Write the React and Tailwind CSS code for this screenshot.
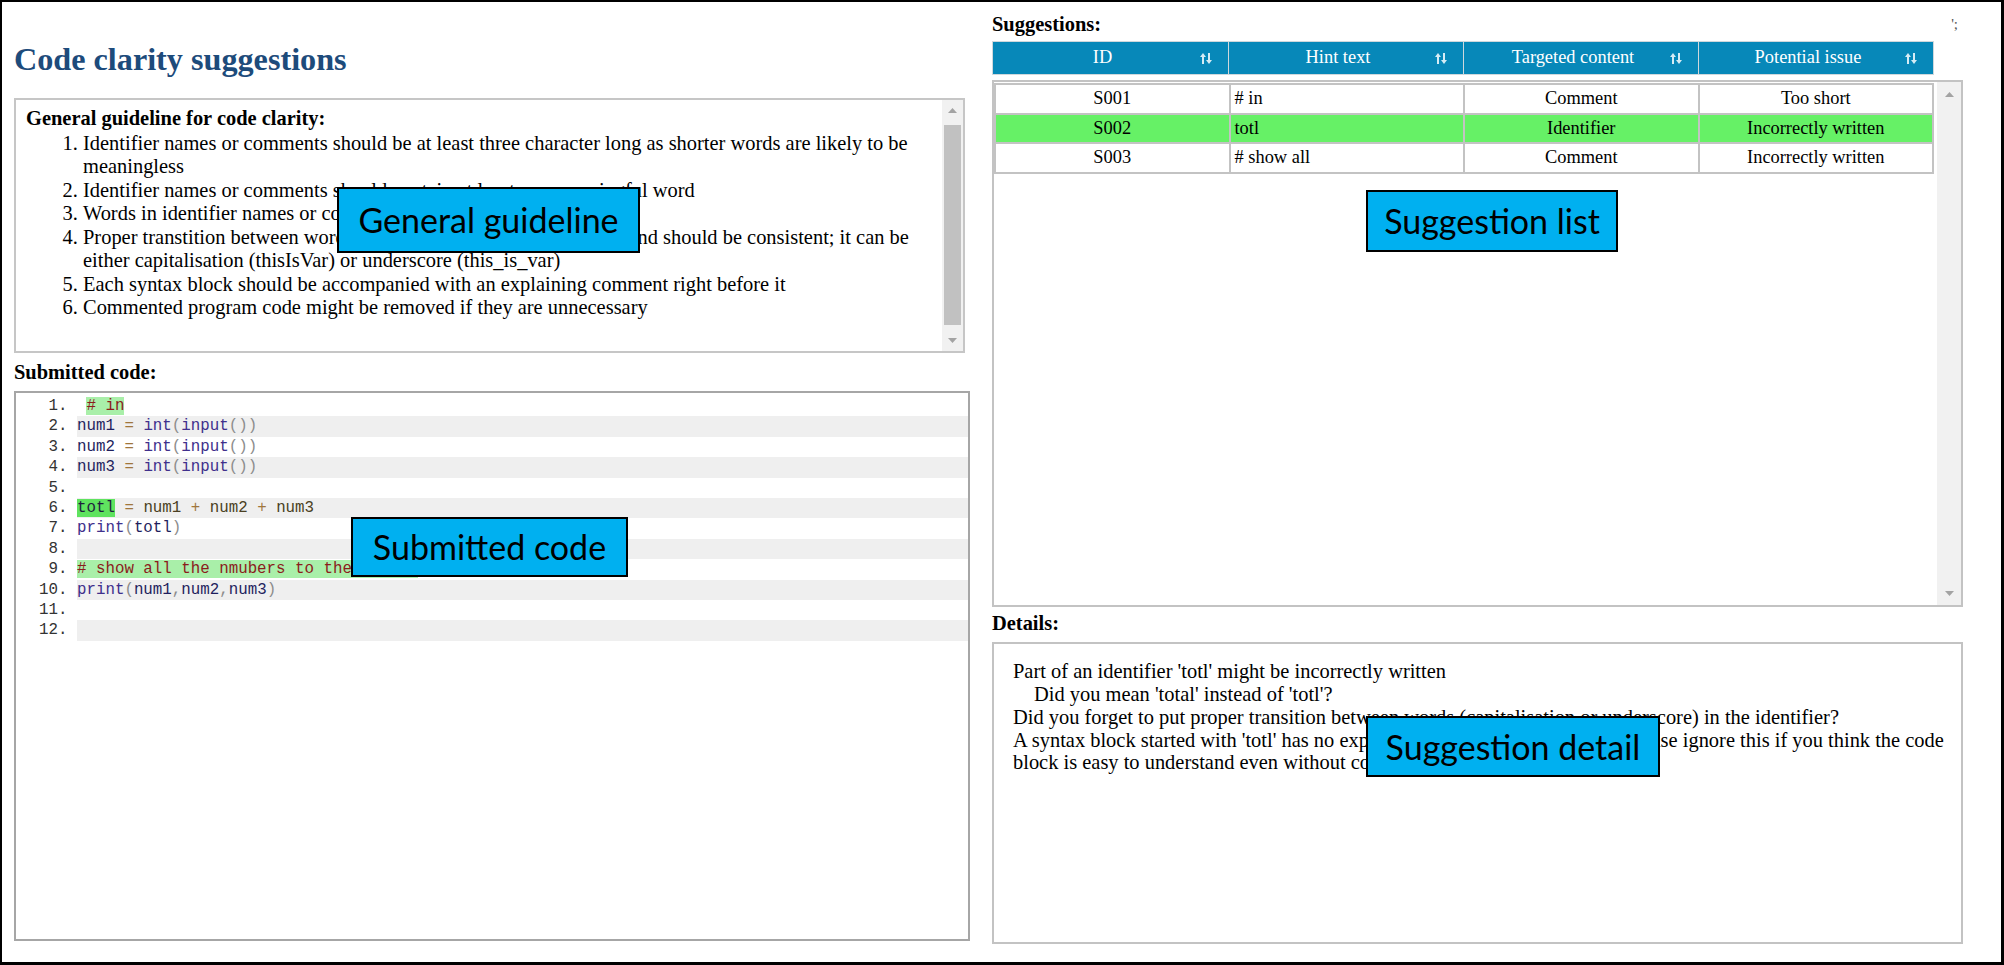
import React from "react"

const serif = "font-['Liberation_Serif','Times_New_Roman',serif]"
const mono = "font-['Liberation_Mono','Courier_New',monospace]"

const ident = "text-[#1f1f5e]"
const op = "text-[#a0763c]"
const fn = "text-[#40308c]"
const punc = "text-[#8c8c8c]"
const cmt = "text-[#8b1c1c]"

function UpArrow() {
  return (
    <svg width="9" height="5" viewBox="0 0 9 5">
      <path d="M4.5 0L9 5H0z" fill="#a3a3a3" />
    </svg>
  )
}

function DownArrow() {
  return (
    <svg width="9" height="5" viewBox="0 0 9 5">
      <path d="M0 0H9L4.5 5z" fill="#a3a3a3" />
    </svg>
  )
}

function SortIcon() {
  return (
    <svg width="12" height="11" viewBox="0 0 12 11" className="mr-[16px] shrink-0">
      <path d="M3 0L6 4H4V11H2V4H0z" fill="#d6ecf5" />
      <path d="M9 11L12 7H10V0H8V7H6z" fill="#d6ecf5" />
    </svg>
  )
}

function Callout({ className, children }) {
  return (
    <div
      className={
        "absolute flex items-center justify-center border-2 border-black bg-[#00b0f0] font-['Lato','Noto_Sans',sans-serif] text-[34px] leading-none text-black " +
        className
      }
    >
      {children}
    </div>
  )
}

const codeLines = [
  <>
    {" "}
    <span className={"bg-[#a9efa9] " + cmt}># in</span>
  </>,
  <>
    <span className={ident}>num1</span> <span className={op}>=</span> <span className={fn}>int</span>
    <span className={punc}>(</span>
    <span className={fn}>input</span>
    <span className={punc}>())</span>
  </>,
  <>
    <span className={ident}>num2</span> <span className={op}>=</span> <span className={fn}>int</span>
    <span className={punc}>(</span>
    <span className={fn}>input</span>
    <span className={punc}>())</span>
  </>,
  <>
    <span className={ident}>num3</span> <span className={op}>=</span> <span className={fn}>int</span>
    <span className={punc}>(</span>
    <span className={fn}>input</span>
    <span className={punc}>())</span>
  </>,
  null,
  <>
    <span className="bg-[#5fe35f] text-[#1f1f3e]">totl</span> <span className={op}>=</span>{" "}
    <span className="text-[#4a3f22]">num1</span> <span className={op}>+</span>{" "}
    <span className="text-[#4a3f22]">num2</span> <span className={op}>+</span>{" "}
    <span className="text-[#4a3f22]">num3</span>
  </>,
  <>
    <span className={fn}>print</span>
    <span className={punc}>(</span>
    <span className={ident}>totl</span>
    <span className={punc}>)</span>
  </>,
  null,
  <>
    <span className={"bg-[#a9efa9] " + cmt}># show all the nmubers to the screen</span>
  </>,
  <>
    <span className={fn}>print</span>
    <span className={punc}>(</span>
    <span className={ident}>num1</span>
    <span className={punc}>,</span>
    <span className={ident}>num2</span>
    <span className={punc}>,</span>
    <span className={ident}>num3</span>
    <span className={punc}>)</span>
  </>,
  null,
  null,
]

const rows = [
  { id: "S001", hint: "# in", target: "Comment", issue: "Too short" },
  { id: "S002", hint: "totl", target: "Identifier", issue: "Incorrectly written", active: true },
  { id: "S003", hint: "# show all", target: "Comment", issue: "Incorrectly written" },
]

const headers = ["ID", "Hint text", "Targeted content", "Potential issue"]

export default function App() {
  return (
    <div
      className={
        "relative flex h-[965px] w-[2004px] overflow-hidden border-b-[3px] border-l-2 border-r-[3px] border-t-2 border-black bg-white text-black " +
        serif
      }
    >
      {/* left column */}
      <div className="ml-[12px] flex w-[956px] flex-col">
        <h2 className="mt-[38px] h-[38px] text-[32.2px] font-bold leading-[38px] text-[#1d4b7b]">
          Code clarity suggestions
        </h2>

        <div className="mt-[20px] flex h-[255px] w-[951px] border-2 border-[#c6c6c6]">
          <div className="flex-1 pl-[10px] pt-[7px] text-[20.45px] leading-[23.45px]">
            <div className="font-bold">General guideline for code clarity:</div>
            <ol className="mt-[1.5px] list-decimal whitespace-nowrap pl-[57px]">
              <li>
                Identifier names or comments should be at least three character long as shorter words are likely to be
                <br />
                meaningless
              </li>
              <li>Identifier names or comments should contain at least one meaningful word</li>
              <li>Words in identifier names or comments should be spelled correctly</li>
              <li>
                Proper transtition between words in identifier names is mandatory and should be consistent; it can be
                <br />
                either capitalisation (thisIsVar) or underscore (this_is_var)
              </li>
              <li>Each syntax block should be accompanied with an explaining comment right before it</li>
              <li>Commented program code might be removed if they are unnecessary</li>
            </ol>
          </div>
          <div className="flex w-[21px] flex-col bg-[#f1f1f1]">
            <div className="flex h-[21px] items-center justify-center">
              <UpArrow />
            </div>
            <div className="flex-1 px-[2px] pb-[5px] pt-[4px]">
              <div className="h-[200px] bg-[#c1c1c1]" />
            </div>
            <div className="flex h-[21px] items-center justify-center">
              <DownArrow />
            </div>
          </div>
        </div>

        <div className="mt-[8.35px] text-[20.45px] font-bold leading-[23.5px]">Submitted code:</div>

        <div className="mt-[6.15px] h-[550px] w-[956px] border-2 border-[#a6a6a6] pt-[3px]">
          <ol className={"list-decimal pl-[61px] text-[15.8px] leading-[20.4px] text-[#333] " + mono}>
            {codeLines.map((line, i) => (
              <li key={i} className={"h-[20.4px] whitespace-pre " + (i % 2 === 1 ? "bg-[#efefef]" : "")}>
                {line}
              </li>
            ))}
          </ol>
        </div>
      </div>

      {/* right column */}
      <div className="ml-[22px] flex w-[971px] flex-col">
        <div className="mt-[11px] flex h-[23.5px] items-start justify-between">
          <span className="text-[20.45px] font-bold leading-[23.5px]">Suggestions:</span>
          <span className="mr-[5px] mt-[4px] text-[15px] leading-none text-[#555]">';</span>
        </div>

        <div className="mt-[4.5px] grid h-[34px] w-[942px] grid-cols-4 border border-[#cfd8dc] bg-[#0788b9] text-[18.4px] text-white">
          {headers.map((h, i) => (
            <div key={h} className={"flex items-center " + (i > 0 ? "border-l border-[#cfd8dc]" : "")}>
              <span className="flex-1 pl-[12px] text-center">{h}</span>
              <SortIcon />
            </div>
          ))}
        </div>

        <div className="mt-[5px] flex h-[527px] w-[971px] border-2 border-[#c3c3c3]">
          <div className="w-[943px] pt-[1px]">
            <div className="w-[940px] border-l-2 border-t-2 border-[#c3c3c3] text-[18.4px]">
              {rows.map((r) => (
                <div
                  key={r.id}
                  className={
                    "grid h-[29.5px] grid-cols-4 border-b-2 border-[#c3c3c3] " + (r.active ? "bg-[#66f166]" : "bg-white")
                  }
                >
                  <div className="flex items-center justify-center border-r-2 border-[#c3c3c3]">{r.id}</div>
                  <div className="flex items-center border-r-2 border-[#c3c3c3] pl-[4px]">{r.hint}</div>
                  <div className="flex items-center justify-center border-r-2 border-[#c3c3c3]">{r.target}</div>
                  <div className="flex items-center justify-center border-r-2 border-[#c3c3c3]">{r.issue}</div>
                </div>
              ))}
            </div>
          </div>
          <div className="flex w-[24px] flex-col justify-between bg-[#f1f1f1]">
            <div className="flex h-[24px] items-center justify-center">
              <UpArrow />
            </div>
            <div className="flex h-[24px] items-center justify-center">
              <DownArrow />
            </div>
          </div>
        </div>

        <div className="mt-[5.3px] text-[20.45px] font-bold leading-[23.5px]">Details:</div>

        <div className="mt-[6px] h-[302px] w-[971px] whitespace-nowrap border-2 border-[#c3c3c3] pl-[19px] pt-[16.7px] text-[20.45px] leading-[22.75px]">
          <div>Part of an identifier 'totl' might be incorrectly written</div>
          <div className="pl-[21px]">Did you mean 'total' instead of 'totl'?</div>
          <div>
            Did you forget to put proper transition between words (capitalisation or underscore) in the identifier?
          </div>
          <div>
            A syntax block started with 'totl' has no explaining comment just before it. Please ignore this if you think the code
          </div>
          <div>block is easy to understand even without comment.</div>
        </div>
      </div>

      {/* annotation callouts */}
      <Callout className="left-[335px] top-[185px] h-[66px] w-[303px]">General guideline</Callout>
      <Callout className="left-[349px] top-[515px] h-[60px] w-[277px]">Submitted code</Callout>
      <Callout className="left-[1364px] top-[188px] h-[62px] w-[252px]">Suggestion list</Callout>
      <Callout className="left-[1364px] top-[714px] h-[61px] w-[294px]">Suggestion detail</Callout>
    </div>
  )
}
